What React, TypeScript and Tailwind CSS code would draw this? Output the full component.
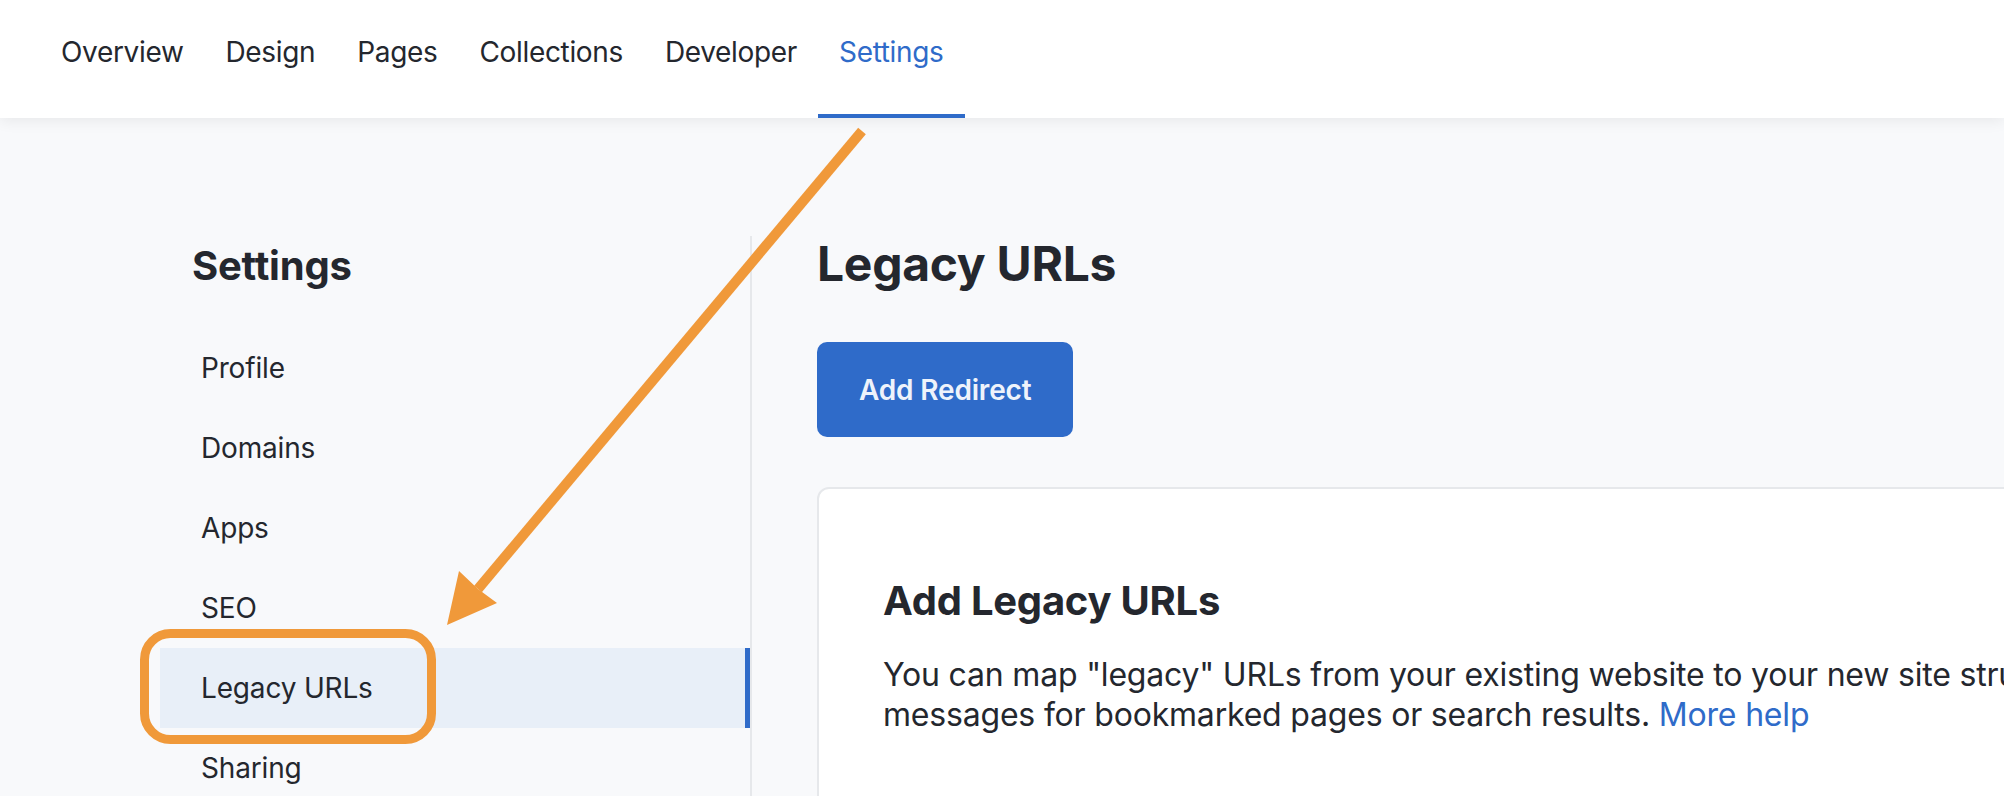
import React from "react";

const tabs = ["Overview", "Design", "Pages", "Collections", "Developer", "Settings"];
const settingsLinks = ["Profile", "Domains", "Apps", "SEO", "Legacy URLs", "Sharing"];

function TopNav({ active }: { active: string }) {
  return (
    <header className="relative z-10 h-[118px] bg-white shadow-[0_3px_14px_rgba(0,0,0,0.07)]">
      <nav className="flex h-full pl-[40px]">
        {tabs.map((tab) => (
          <a
            key={tab}
            href="#"
            className={
              tab === active
                ? "h-full border-b-4 border-[#2f6bc9] px-[21px] pt-[32px] text-[28px] leading-[40px] tracking-[-0.012em] text-[#2f6bc9]"
                : "h-full border-b-4 border-transparent px-[21px] pt-[32px] text-[28px] leading-[40px] tracking-[-0.012em] text-[#24272e]"
            }
          >
            {tab}
          </a>
        ))}
      </nav>
    </header>
  );
}

function Sidebar({ active }: { active: string }) {
  return (
    <aside className="w-[592px] shrink-0 border-r-2 border-[#e6e8eb] pt-[6px]">
      <h2 className="pl-[32px] text-[40px] font-bold leading-[48px] tracking-[-0.005em] text-[#24272e]">Settings</h2>
      <ul className="mt-[38px]">
        {settingsLinks.map((link) => (
          <li key={link}>
            <a
              href="#"
              className={
                link === active
                  ? "block h-[80px] border-r-[5px] border-[#2f6bc9] bg-[#e8eff8] pl-[41px] text-[28px] leading-[80px] tracking-[-0.006em] text-[#24272e]"
                  : "block h-[80px] border-r-[5px] border-transparent pl-[41px] text-[28px] leading-[80px] tracking-[-0.006em] text-[#24272e]"
              }
            >
              {link}
            </a>
          </li>
        ))}
      </ul>
    </aside>
  );
}

function LegacyUrls() {
  return (
    <section className="min-w-0 flex-1 pl-[65px]">
      <h1 className="text-[48px] font-bold leading-[56px] tracking-[-0.006em] text-[#24272e]">Legacy URLs</h1>
      <button className="mt-[50px] h-[95px] rounded-[10px] bg-[#2f6bc9] px-[42px] text-[28px] font-semibold tracking-[-0.006em] text-[#eef3fb]">
        Add Redirect
      </button>
      <div className="mt-[50px] h-[420px] w-[1800px] rounded-[12px] border-2 border-[#e6e8eb] bg-white pl-[64px] pt-[88px]">
        <h3 className="text-[40px] font-bold leading-[48px] tracking-[-0.006em] text-[#24272e]">Add Legacy URLs</h3>
        <p className="mt-[30px] whitespace-nowrap text-[32px] leading-[40px] tracking-[-0.006em] text-[#24272e]">
          You can map "legacy" URLs from your existing website to your new site structure to avoid 404 error
          <br />
          messages for bookmarked pages or search results.{" "}
          <a href="#" className="text-[#2f6bc9]">
            More help
          </a>
        </p>
      </div>
    </section>
  );
}

// Orange callout: box around the active link plus an arrow from the Settings tab
function Callout() {
  return (
    <svg className="pointer-events-none absolute left-0 top-0 z-20" width="2004" height="796" viewBox="0 0 2004 796">
      <rect x="144.5" y="633.5" width="287" height="106" rx="26" fill="none" stroke="#f0993a" strokeWidth="9" />
      <line x1="862" y1="131" x2="478" y2="589" stroke="#f0993a" strokeWidth="10" />
      <polygon points="447,625 459,571 478,589 497,603" fill="#f0993a" />
    </svg>
  );
}

export default function App() {
  return (
    <div className="relative h-[796px] w-full overflow-hidden bg-[#f8f9fb] font-['Inter','Noto_Sans',sans-serif]">
      <TopNav active="Settings" />
      <div className="flex pl-[160px] pt-[118px]">
        <Sidebar active="Legacy URLs" />
        <LegacyUrls />
      </div>
      <Callout />
    </div>
  );
}
